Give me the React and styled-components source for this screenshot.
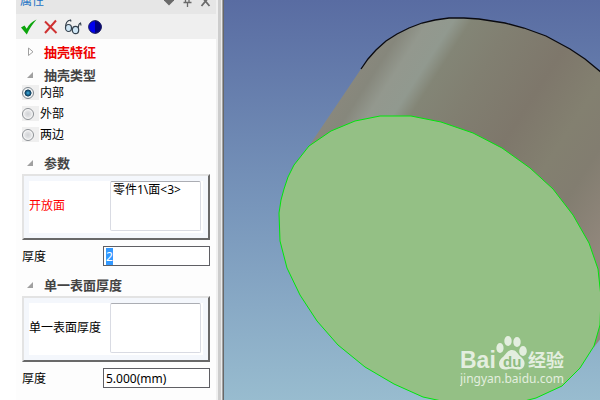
import { useState } from "react";
import styled, { createGlobalStyle } from "styled-components";

const GlobalStyle = createGlobalStyle`
  * {
    box-sizing: border-box;
  }

  body {
    margin: 0;
    background: #ffffff;
    color: #000000;
    font-family: "Noto Sans", "Noto Sans CJK SC", sans-serif;
    font-size: 12px;
    overflow: hidden;
  }

  button,
  input,
  textarea {
    font: inherit;
    color: inherit;
  }
`;

const Workspace = styled.div`
  display: flex;
  height: 100vh;
  padding-left: 16px;
  overflow: hidden;
`;

const Panel = styled.aside`
  flex: 0 0 200px;
  margin-top: -12px;
  background: #fdfdfd;
`;

const TitleBar = styled.header`
  display: flex;
  align-items: center;
  justify-content: space-between;
  height: 26px;
  padding: 0 5px 0 4px;
  background: #e6e6e6;
`;

const Title = styled.h1`
  margin: 0;
  color: #1a72c4;
  font-size: 12px;
  font-weight: 400;
  line-height: 16px;
`;

const WindowButtons = styled.div`
  display: flex;
  gap: 7px;
`;

const IconButton = styled.button`
  display: flex;
  padding: 0;
  border: 0;
  background: none;
`;

const Toolbar = styled.div`
  display: flex;
  align-items: center;
  gap: 6px;
  height: 25px;
  padding: 0 4px;
  background: #efefef;
`;

const SectionButton = styled.button`
  display: flex;
  align-items: center;
  gap: 10px;
  width: 100%;
  height: 20px;
  margin: ${({ $first }) => ($first ? "3px 0 0" : "9px 0 1px")};
  padding: 0 11px;
  border: 0;
  background: none;
  color: ${({ $alert }) => ($alert ? "#ee0000" : "#444444")};
  font-size: 13px;
  font-weight: 700;
  line-height: 20px;
`;

const RadioGroup = styled.div`
  display: flex;
  flex-direction: column;
  gap: 6px;
  padding: 0 6px 2px;
`;

const RadioLabel = styled.label`
  display: flex;
  align-items: center;
  gap: 6px;
  height: 15px;
  background: linear-gradient(to right, #efefef 17px, transparent 17px);
  line-height: 15px;
`;

const Radio = styled.input`
  appearance: none;
  width: 12px;
  height: 12px;
  margin: 0;
  border: 1px solid #8b8f94;
  border-radius: 50%;
  background: radial-gradient(circle, #d0d2d5 0, #e2e3e5 45%, #f8f8f8 65%);

  &:checked {
    border-color: #7d868e;
    background: radial-gradient(
      circle at 50% 50%,
      #45b4e4 0,
      #17608a 28%,
      #123c58 45%,
      #f2f4f5 54%
    );
  }
`;

const PickBox = styled.div`
  display: flex;
  align-items: center;
  height: 66px;
  margin: 0 6px;
  padding: 5px;
  border: 2px solid;
  border-color: #e3e3e3 #696969 #696969 #e3e3e3;
  background: #f4f7fc;
`;

const PickInner = styled.div`
  display: flex;
  flex: 1;
  align-items: center;
  justify-content: space-between;
  height: 52px;
  padding: 0 2px 4px 0;
  background: #ffffff;
`;

const PickLabel = styled.label`
  color: ${({ $alert }) => ($alert ? "#ff0000" : "#000000")};
  white-space: nowrap;
`;

const PickList = styled.textarea`
  align-self: flex-start;
  width: 91px;
  height: 50px;
  padding: 0 2px;
  border: 1px solid #d9dbe3;
  border-top-color: #abadb3;
  border-radius: 2px;
  outline: 0;
  background: #ffffff;
  line-height: 16px;
  resize: none;
`;

const Field = styled.div`
  display: flex;
  align-items: center;
  justify-content: space-between;
  margin: 6px 6px 0;
`;

const FieldInput = styled.input`
  width: 107px;
  height: 20px;
  padding: 0 2px;
  border: 1px solid #5f5f64;
  border-radius: 0;
  outline: 0;
  background: #ffffff;

  &::selection {
    background: #3399ff;
    color: #ffffff;
  }
`;

const Splitter = styled.div`
  flex: 0 0 8px;
  background: linear-gradient(
    to right,
    #f0f0f0 0 2px,
    #cdcdcd 2px 5px,
    #ececec 5px 6px,
    #a0a0a0 6px 7px,
    #686868 7px
  );
`;

const Viewport = styled.main`
  position: relative;
  flex: 1;
  min-width: 0;
  background: linear-gradient(#596ca2, #7896bb 52%, #98bccf);
`;

const Model = styled.svg`
  display: block;
  width: 100%;
  height: 100%;
`;

const Watermark = styled.svg`
  position: absolute;
  right: 32px;
  bottom: 12px;
`;

const Section = ({ open, ...props }) => (
  <SectionButton type="button" aria-expanded={open} {...props}>
    <svg width="7" height="10" viewBox="0 0 7 10">
      {open ? (
        <path d="M6 2v6H0z" fill="#a0a0a0" />
      ) : (
        <path d="M1.500 1v7.500l4.500-3.700z" fill="#fff" stroke="#a0a0a0" />
      )}
    </svg>
    {props.children}
  </SectionButton>
);

const modes = ["内部", "外部", "两边"];

const facePoints =
  "279,213 281,200 284,189 288,177 294,165 309,146 331,131 355,121 380,116 411,116 441,122 473,133 502,148 530,168 553,189 573,215 589,243 598,269 601,297 600,325 594,346 580,368 562,386 536,398 505,406 465,406 423,397 394,384 365,367 338,345 317,321 300,295 287,268 280,241";

const rimPoints =
  "361,69 368,59 376,50 386,41 397,34 409,28 422,23 435,20 449,18 464,18 479,19 492,21 505,23 524,28 546,36 570,49 585,59 602,73";

function App() {
  const [mode, setMode] = useState("内部");
  const [openFaces, setOpenFaces] = useState("零件1\\面<3>");
  const [surfaces, setSurfaces] = useState("");

  return (
    <>
      <GlobalStyle />
      <Workspace>
        <Panel>
          <TitleBar>
            <Title>属性</Title>
            <WindowButtons>
              <IconButton type="button" aria-label="Menu">
                <svg width="12" height="12" viewBox="0 0 12 12">
                  <path d="M1 2h10v3.500L6 10.500l-5-5z" fill="#6a6a6a" />
                </svg>
              </IconButton>
              <IconButton type="button" aria-label="Pin">
                <svg width="11" height="12" viewBox="0 0 11 12">
                  <path
                    d="M3.500 0v7M7 0v7M1.500 7.500h8M5.500 8v4"
                    fill="none"
                    stroke="#6a6a6a"
                    strokeWidth="1.300"
                  />
                </svg>
              </IconButton>
              <IconButton type="button" aria-label="Close">
                <svg width="11" height="12" viewBox="0 0 11 12">
                  <path
                    d="M2 2l7.500 9M9 2l-7.500 9"
                    stroke="#6a6a6a"
                    strokeWidth="1.800"
                  />
                </svg>
              </IconButton>
            </WindowButtons>
          </TitleBar>

          <Toolbar>
            <IconButton type="button" aria-label="OK">
              <svg width="17" height="16" viewBox="0 0 17 16">
                <path
                  d="M1 8.500l3.500-2 2.200 3.200C9 5.500 12 2.500 16.500.5 12.500 5 9.500 9.500 6.800 15.500z"
                  fill="#0ca50c"
                />
              </svg>
            </IconButton>
            <IconButton type="button" aria-label="Cancel">
              <svg width="15" height="16" viewBox="0 0 15 16">
                <path
                  d="M2 2.500l11.500 11.500M13 1.500L2 14"
                  stroke="#cf3232"
                  strokeWidth="2"
                />
              </svg>
            </IconButton>
            <IconButton type="button" aria-label="Preview">
              <svg width="18" height="16" viewBox="0 0 18 16" fill="none">
                <path
                  d="M1.500 8.500C1.500 4.500 3 1.500 6.500 1l.5 1.500M7.500 9.500l1 .5M14.300 10c0-3.500.7-5.500 2.200-6l.5 2.500"
                  stroke="#35424e"
                  strokeWidth="1.200"
                />
                <ellipse
                  cx="4.500"
                  cy="9"
                  rx="3"
                  ry="3.500"
                  fill="#cfe6f5"
                  stroke="#35424e"
                  strokeWidth="1.200"
                />
                <ellipse
                  cx="11.500"
                  cy="11"
                  rx="3.200"
                  ry="3.700"
                  fill="#cfe6f5"
                  stroke="#35424e"
                  strokeWidth="1.200"
                />
              </svg>
            </IconButton>
            <IconButton type="button" aria-label="Shading">
              <svg width="14" height="16" viewBox="0 0 14 16">
                <circle cx="7" cy="8" r="6.500" fill="#0000f0" />
                <path d="M7 1.500a6.500 6.500 0 0 1 0 13z" fill="#000080" />
                <circle cx="7" cy="8" r="6.300" fill="none" stroke="#222250" />
              </svg>
            </IconButton>
          </Toolbar>

          <Section $first $alert>
            抽壳特征
          </Section>

          <Section $first open>
            抽壳类型
          </Section>
          <RadioGroup role="radiogroup">
            {modes.map((name) => (
              <RadioLabel key={name}>
                <Radio
                  type="radio"
                  name="mode"
                  checked={mode === name}
                  onChange={() => setMode(name)}
                />
                {name}
              </RadioLabel>
            ))}
          </RadioGroup>

          <Section open>参数</Section>
          <PickBox>
            <PickInner>
              <PickLabel $alert htmlFor="open-faces">
                开放面
              </PickLabel>
              <PickList
                id="open-faces"
                value={openFaces}
                onChange={(e) => setOpenFaces(e.target.value)}
              />
            </PickInner>
          </PickBox>
          <Field>
            <label htmlFor="thickness">厚度</label>
            <FieldInput
              id="thickness"
              defaultValue="2"
              autoFocus
              onFocus={(e) => e.target.select()}
            />
          </Field>

          <Section open>单一表面厚度</Section>
          <PickBox>
            <PickInner>
              <PickLabel htmlFor="surfaces">单一表面厚度</PickLabel>
              <PickList
                id="surfaces"
                value={surfaces}
                onChange={(e) => setSurfaces(e.target.value)}
              />
            </PickInner>
          </PickBox>
          <Field>
            <label htmlFor="surface-thickness">厚度</label>
            <FieldInput id="surface-thickness" defaultValue="5.000(mm)" />
          </Field>
        </Panel>

        <Splitter />

        <Viewport>
          <Model viewBox="224 0 376 400" preserveAspectRatio="xMinYMin slice">
            <defs>
              <linearGradient
                id="side"
                gradientUnits="userSpaceOnUse"
                x1="309"
                y1="146"
                x2="561"
                y2="308"
              >
                <stop offset="0" stopColor="#89887d" />
                <stop offset="0.050" stopColor="#86877c" />
                <stop offset="0.110" stopColor="#93988e" />
                <stop offset="0.180" stopColor="#91998f" />
                <stop offset="0.230" stopColor="#838576" />
                <stop offset="0.350" stopColor="#817f71" />
                <stop offset="0.540" stopColor="#7e776b" />
                <stop offset="0.700" stopColor="#838070" />
                <stop offset="0.820" stopColor="#827d70" />
                <stop offset="1" stopColor="#91877c" />
              </linearGradient>
            </defs>
            <polygon
              points={`294,165 309,146 ${rimPoints} 640,110 640,290 594,347 400,300`}
              fill="url(#side)"
            />
            <polyline
              points={rimPoints}
              fill="none"
              stroke="#0a0a10"
              strokeWidth="1.300"
            />
            <polygon points={facePoints} fill="#94c085" stroke="#00e60c" />
          </Model>

          <Watermark width="108" height="52" viewBox="0 0 108 52" fill="#e3eedf">
            <text
              x="0"
              y="32"
              fontFamily="Liberation Sans, sans-serif"
              fontSize="23"
              fontWeight="700"
            >
              Bai
            </text>
            <ellipse cx="40" cy="12" rx="3.600" ry="5" />
            <ellipse cx="48" cy="5" rx="3.700" ry="5" />
            <ellipse cx="57" cy="6" rx="3.700" ry="5" />
            <ellipse cx="63" cy="15" rx="3.800" ry="5" />
            <path d="M52 14c4 0 5 3 8 6 3 2.500 5 5 4.500 8-.5 4-3 5.500-6 5.500-3 0-4-1-6.500-1s-4 1-7 1c-4 0-6-3-6-6 0-3 2-5 4.500-7 3-3 4.500-6.500 8.500-6.500z" />
            <text
              x="43"
              y="31"
              fill="#8dbb80"
              fontFamily="Liberation Sans, sans-serif"
              fontSize="15"
              fontWeight="700"
            >
              du
            </text>
            <text
              x="68"
              y="31"
              fontFamily="Noto Sans CJK SC, sans-serif"
              fontSize="18"
              fontWeight="700"
            >
              经验
            </text>
            <text x="0" y="47" fontFamily="Noto Sans, sans-serif" fontSize="12">
              jingyan.baidu.com
            </text>
          </Watermark>
        </Viewport>
      </Workspace>
    </>
  );
}

export default App;
